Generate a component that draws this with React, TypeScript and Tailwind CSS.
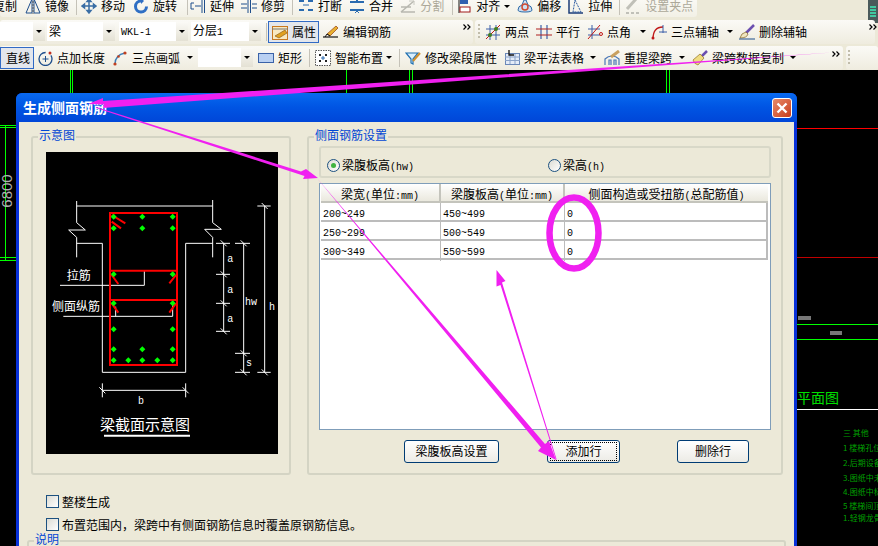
import type { ReactNode } from 'react';

const cjk = 'font-["Noto_Sans_CJK_SC",sans-serif]';

// SimSun style latin: half width characters
function L({ children }: { children: ReactNode }) {
  return <span className='font-["Liberation_Mono",monospace] text-[10px]'>{children}</span>;
}

function Svg({ children }: { children: ReactNode }) {
  return (
    <svg width="16" height="16" viewBox="0 0 16 16" fill="none" className="shrink-0">
      {children}
    </svg>
  );
}

const icons: Record<string, ReactNode> = {
  mirror: <><path d="M7 1 1 15h6zM9 1l6 14H9z" stroke="#1f4e8c" /><path d="M8 0v16" stroke="#555" strokeDasharray="2 1" /></>,
  move: <path d="M8 1v14M1 8h14M8 1 6 3.500h4zM8 15l-2-2.500h4zM1 8l2.500-2v4zM15 8l-2.500-2v4z" stroke="#3a6ea5" strokeWidth="1.500" />,
  rotate: <><circle cx="8" cy="8.500" r="5.500" stroke="#2f6fc4" strokeWidth="3" strokeDasharray="26 8" /><path d="M8 0v6l3-3z" fill="#2f6fc4" /></>,
  extend: <path d="M12 1v14M14.500 1v14M1 5h3M1 11h3M5 8h6M1 5v6" stroke="#1f4e8c" />,
  trim: <path d="M7 1v14M9.500 1v14M0 6h6M0 10h6M11 6h5M11 10h5" stroke="#1f4e8c" />,
  breakLine: <><path d="M1 3h5M10 3h5M1 12h5M10 12h5" stroke="#2a6bb0" strokeWidth="2" /><path d="M5 7h6M3 1v3M13 1v3" stroke="#2a6bb0" /></>,
  merge: <><path d="M1 4h14M1 12h14" stroke="#2a6bb0" strokeWidth="2" /><path d="M6 1l2 2 2-2M6 15l2-2 2 2" stroke="#2a6bb0" /></>,
  split: <><path d="M1 14 14 3M1 14h14M1 9h10" stroke="#b8b8b0" strokeWidth="1.500" /><path d="M9 3h5v4" stroke="#c8c8c0" /></>,
  align: <><path d="M3 1v14" stroke="#111" /><rect x="4" y="2" width="8" height="4" fill="#2f5fb0" /><rect x="4" y="9" width="10" height="5" fill="#fff" stroke="#a01818" /></>,
  offset: <><path d="M1 12q0-4 4-5l2-5h2l2 5q4 1 4 5 0 2-7 2t-7-2z" fill="#cfe0f2" stroke="#2d6aa8" /><circle cx="8" cy="9" r="3" stroke="#d04a30" strokeWidth="1.500" /></>,
  stretch: <><path d="M1 1v14h14" stroke="#1b3d78" strokeWidth="1.500" /><path d="M7 2l6 12H5z" stroke="#2b5aa0" strokeDasharray="2 1" /></>,
  clip: <><path d="M11 1 2 11" stroke="#c0c0b8" strokeWidth="3" /><path d="M1 15h3M6 15h3M11 15h3" stroke="#c0c0b8" strokeWidth="2" /></>,
  props: <><rect x="0.500" y="2.500" width="15" height="13" fill="#f8e8c0" stroke="#c87820" /><path d="M0 5h16" stroke="#777" /><path d="M3 12 13 6l2 3-8 5z" fill="#e0a020" stroke="#805010" strokeWidth=".6" /></>,
  pencil: <><path d="M4 10 13 2l2 2-8 8z" fill="#e8b030" stroke="#a05020" strokeWidth=".8" /><path d="M0 13h15" stroke="#111" strokeWidth="1.200" /><path d="M2 13 4 10l3 2" stroke="#111" /></>,
  twoPoint: <><path d="M5 1v15M11 1v15M1 5h14M1 11h14" stroke="#3b5fa8" /><path d="M1 15 15 1" stroke="#c01818" /><circle cx="11" cy="5" r="2" fill="#3f7f20" /><circle cx="5" cy="11" r="2" fill="#3f7f20" /></>,
  parallel: <><path d="M5 1v14M11 1v14" stroke="#3b5fa8" strokeWidth="1.200" /><path d="M0 5h16M0 11h16" stroke="#b02020" strokeWidth="1.200" /></>,
  angle: <><path d="M5 1v14M1 5h12M1 11h12" stroke="#3b5fa8" /><path d="M1 15 13 1" stroke="#c01818" /><circle cx="14" cy="10" r="1.500" stroke="#c01818" /></>,
  threeAxis: <><path d="M2 15q0-12 10-12" stroke="#c01818" strokeWidth="1.300" /><path d="M8 8h8M12 1v8" stroke="#3b5fa8" /><circle cx="2" cy="14" r="1.500" fill="#c01818" /></>,
  erase: <><path d="M7 9 15 1" stroke="#6b4fb0" strokeWidth="2.500" /><path d="M1 14q1-5 6-6l2 2q-1 4-8 4z" fill="#f0e6c0" stroke="#806020" strokeWidth=".7" /><path d="M0 15h16" stroke="#1f4e8c" /></>,
  pointLen: <><circle cx="8.500" cy="9" r="6.500" stroke="#1f4e8c" strokeWidth="1.300" strokeDasharray="30 6" /><path d="M8.500 6v6M5.500 9h6" stroke="#1f4e8c" /><circle cx="13" cy="3" r="1.500" fill="#c03020" /></>,
  arc: <><path d="M3 14q0-9 10-11" stroke="#3b7fb8" strokeWidth="1.300" /><circle cx="3" cy="14" r="1.600" fill="#c04020" /><circle cx="6.500" cy="6.500" r="1.300" fill="#c04020" /><circle cx="13" cy="3" r="1.600" fill="#c04020" /></>,
  rect: <rect x="0.500" y="3.500" width="15" height="9" fill="#b9d0f2" stroke="#3a62a8" />,
  smart: <><rect x="0.500" y="0.500" width="15" height="15" fill="#fff" stroke="#555" strokeDasharray="1.500 1" /><path d="M4 4h2v2H4zM10 4h2v2h-2zM4 10h2v2H4zM10 10h2v2h-2z" fill="#222" /><path d="M8 6v4M6 8h4" stroke="#2a6bb0" /></>,
  filter: <><path d="M1 3h12L8 9v5l-2-1V9z" fill="#d9eefc" stroke="#1f6fb0" strokeWidth="1.200" /><path d="M8 11 15 3" stroke="#d09030" strokeWidth="2" /></>,
  table: <><rect x="1.500" y="3.500" width="14" height="11" fill="#e4ecf8" stroke="#6b88b8" /><path d="M1 7h15M1 10.500h15M6 4v10M11 4v10" stroke="#8aa2c8" /><path d="M5 0v5h5" stroke="#111" strokeWidth="1.300" /></>,
  reExtract: <><path d="M1 15V9q3-3 7-3t7 3v6M5 15V10h2v5M10 15v-5h2v5" stroke="#4a78b8" strokeWidth="1.200" /><path d="M7 7 15 1" stroke="#c8a060" strokeWidth="3" /></>,
  broom: <><path d="M10 6 15 1" stroke="#6b4fb0" strokeWidth="2.500" /><path d="M1 10 8 4l4 4-6 7q-4-1-5-5z" fill="#f0dc80" stroke="#907020" strokeWidth=".7" /></>,
};

function Tool({ icon, label, className = '', muted = false }: { icon: string; label: string; className?: string; muted?: boolean }) {
  return (
    <div className={`flex shrink-0 items-center gap-1 ${className}`}>
      <Svg>{icons[icon]}</Svg>
      <span className={`whitespace-nowrap ${muted ? 'text-[#aca899]' : 'text-black'}`}>{label}</span>
    </div>
  );
}

function Arrow({ className = '' }: { className?: string }) {
  return <div className={`h-0 w-0 shrink-0 border-x-[3px] border-t-[3px] border-x-transparent border-t-black ${className}`} />;
}

function Sep({ className = '' }: { className?: string }) {
  return <div className={`h-[18px] w-px shrink-0 bg-[#c5c2b8] ${className}`} />;
}

function Chevrons({ className = '' }: { className?: string }) {
  return (
    <svg width="8" height="6" viewBox="0 0 8 6" fill="none" stroke="#000" strokeWidth="1.200" className={`shrink-0 self-start ${className}`}>
      <path d="M0.500 0.500 3 3 0.500 5.500M4.500 0.500 7 3 4.500 5.500" />
    </svg>
  );
}

function Grip({ className = '' }: { className?: string }) {
  return <div className={`h-[16px] w-[2px] shrink-0 bg-[repeating-linear-gradient(to_bottom,#c1bdab_0,#c1bdab_2px,transparent_2px,transparent_4px)] ${className}`} />;
}

function Combo({ text, className = '' }: { text?: ReactNode; className?: string }) {
  return (
    <div className={`flex h-[19px] shrink-0 items-center justify-between bg-white ${className}`}>
      <span className="-mt-[2px] pl-[2px] whitespace-nowrap">{text}</span>
      <div className="flex h-full w-[12px] items-center justify-center bg-gradient-to-b from-[#fbfaf6] to-[#e4e1d4]">
        <Arrow />
      </div>
    </div>
  );
}

function Toolbar({ children, className = '' }: { children: ReactNode; className?: string }) {
  return (
    <div className={`flex items-center rounded-[3px] bg-gradient-to-b from-[#fbfaf6] to-[#efecdf] ${className}`}>
      {children}
    </div>
  );
}

function TopBars() {
  return (
    <div className="h-[70px] bg-[#ece9d8] text-[12px] leading-none">
      <div className="flex h-[19px] items-start">
        <Toolbar className="-mt-[3px] h-[20px] w-[697px] overflow-hidden from-[#ece9d8] to-[#f2f0e6] pb-[2px]">
          <span className="-ml-[7px]">复制</span>
          <Tool icon="mirror" label="镜像" className="ml-[8px]" />
          <Sep className="ml-[7px]" />
          <Tool icon="move" label="移动" className="ml-[4px]" />
          <Tool icon="rotate" label="旋转" className="ml-[8px]" />
          <Sep className="ml-[10px]" />
          <Tool icon="extend" label="延伸" className="ml-[2px]" />
          <Tool icon="trim" label="修剪" className="ml-[7px]" />
          <Sep className="ml-[7px]" />
          <Tool icon="breakLine" label="打断" className="ml-[5px]" />
          <Tool icon="merge" label="合并" className="ml-[7px]" />
          <Tool icon="split" label="分割" className="ml-[7px]" muted />
          <Sep className="ml-[8px]" />
          <Tool icon="align" label="对齐" className="ml-[3px]" />
          <Arrow className="ml-[4px]" />
          <Tool icon="offset" label="偏移" className="ml-[7px]" />
          <Tool icon="stretch" label="拉伸" className="ml-[7px]" />
          <Sep className="ml-[7px]" />
          <Tool icon="clip" label="设置夹点" className="ml-[5px]" muted />
        </Toolbar>
        <div className="ml-auto flex h-[23px] w-[10px] flex-col items-center justify-center gap-px rounded-bl-[3px] bg-[#4a5a5a]">
          <div className="h-[2px] w-[6px] bg-[#40c8a0]" />
          <div className="h-[2px] w-[6px] bg-[#40c8a0]" />
          <div className="h-[2px] w-[6px] bg-[#40c8a0]" />
          <div className="h-[2px] w-[6px] bg-[#40c8a0]" />
        </div>
      </div>
      <div className="flex h-[26px] items-center">
        <Toolbar className="h-[24px] w-[473px] pb-[1px]">
          <Combo className="w-[45px]" />
          <Combo text="梁" className="ml-[2px] w-[68px]" />
          <Combo text={<L>WKL-1</L>} className="ml-[4px] w-[69px]" />
          <Combo text={<>分层<L>1</L></>} className="ml-[3px] w-[70px]" />
          <Sep className="ml-[5px]" />
          <div className="ml-[1px] flex h-[22px] w-[51px] shrink-0 items-center gap-1 border border-[#316ac5] bg-[#e3e6ec] pl-[3px]">
            <Svg>{icons.props}</Svg>
            <span>属性</span>
          </div>
          <Tool icon="pencil" label="编辑钢筋" className="ml-[4px]" />
          <Chevrons className="ml-[72px] mt-[4px]" />
        </Toolbar>
        <Toolbar className="ml-[2px] h-[24px] w-[400px] pb-[1px]">
          <Grip className="ml-[3px]" />
          <Tool icon="twoPoint" label="两点" className="ml-[5px]" />
          <Tool icon="parallel" label="平行" className="ml-[7px]" />
          <Tool icon="angle" label="点角" className="ml-[7px]" />
          <Arrow className="ml-[9px]" />
          <Tool icon="threeAxis" label="三点辅轴" className="ml-[5px]" />
          <Arrow className="ml-[8px]" />
          <Tool icon="erase" label="删除辅轴" className="ml-[6px]" />
          <Chevrons className="ml-[62px] mt-[4px]" />
        </Toolbar>
      </div>
      <div className="flex h-[25px] items-center">
        <Toolbar className="h-[24px] w-[843px]">
          <div className="flex h-[22px] w-[34px] shrink-0 items-center border border-[#316ac5] bg-[#e3e6ec] pl-[5px]">直线</div>
          <Tool icon="pointLen" label="点加长度" className="ml-[3px]" />
          <Tool icon="arc" label="三点画弧" className="ml-[7px]" />
          <Arrow className="ml-[7px]" />
          <Combo className="ml-[5px] w-[55px]" />
          <Tool icon="rect" label="矩形" className="ml-[5px]" />
          <Sep className="ml-[7px]" />
          <Tool icon="smart" label="智能布置" className="ml-[5px]" />
          <Arrow className="ml-[3px]" />
          <Sep className="ml-[7px]" />
          <Tool icon="filter" label="修改梁段属性" className="ml-[5px]" />
          <Tool icon="table" label="梁平法表格" className="ml-[7px]" />
          <Arrow className="ml-[6px]" />
          <Tool icon="reExtract" label="重提梁跨" className="ml-[8px]" />
          <Arrow className="ml-[7px]" />
          <Tool icon="broom" label="梁跨数据复制" className="ml-[7px]" />
          <Arrow className="ml-[6px]" />
          <Chevrons className="ml-[36px] mt-[5px]" />
        </Toolbar>
        <Toolbar className="ml-[3px] h-[24px] flex-1">
          <Grip className="ml-[2px]" />
        </Toolbar>
      </div>
    </div>
  );
}

function SectionDiagram() {
  const dots: [number, number][] = [
    [281, 290], [367, 290], [458, 290], [281, 325], [367, 325], [458, 325],
    [281, 463], [458, 463], [281, 550], [458, 550], [281, 628], [458, 628],
    [281, 688], [367, 688], [458, 688], [281, 721], [325, 721], [367, 721], [412, 721], [458, 721],
  ];
  const ticks: [number, number, number, number][] = [
    [588, 370, 630, 370], [588, 463, 630, 463], [588, 550, 630, 550], [588, 634, 630, 634],
    [645, 370, 690, 370], [645, 700, 690, 700], [645, 757, 690, 757], [712, 258, 752, 258], [712, 757, 752, 757],
    [611, 370, 611, 634], [671, 370, 671, 757], [734, 258, 734, 757],
    [247, 811, 497, 811], [247, 790, 247, 832], [497, 790, 497, 832],
  ];
  const slashes: [number, number][] = [[611, 370], [611, 463], [611, 550], [611, 634], [671, 370], [671, 700], [671, 757], [734, 258], [734, 757], [247, 811], [497, 811]];
  return (
    <svg viewBox="78 96 696 906" className="h-[302px] w-[232px] bg-black" fill="none">
      <g stroke="#fff" strokeWidth="3">
        <path d="M170 258H578" />
        <path d="M170 243V308L196 330H146L170 352V412M578 240V308L604 328H554L578 352V412" />
        <path d="M170 370H247V757H497V370H578" />
        <path d="M120 496H373V452M130 589H458V545M287 589V560" />
        {ticks.map(([a, b, c, d]) => <line key={`${a}-${b}-${c}-${d}`} x1={a} y1={b} x2={c} y2={d} />)}
        {slashes.map(([x, y]) => <line key={`${x}-${y}`} x1={x - 9} y1={y - 9} x2={x + 9} y2={y + 9} />)}
        <path d="M252 947H510" strokeWidth="6" />
      </g>
      <g stroke="#ff0000" strokeWidth="6">
        <rect x="270" y="279" width="201" height="456" />
        <path d="M270 452H471M270 540H471" />
        <path d="M275 285 316 310M275 305 303 325M275 465 295 492M468 465 448 490M275 550 295 578M468 550 448 578" />
      </g>
      {dots.map(([x, y]) => (
        <path key={`${x}-${y}`} d={`M${x} ${y - 9}L${x + 9} ${y}L${x} ${y + 9}L${x - 9} ${y}Z`} fill="#00ff00" />
      ))}
      <g fill="#fff" fontFamily="'Noto Sans CJK SC', sans-serif" fontSize="36">
        <text x="140" y="480">拉筋</text>
        <text x="96" y="574">侧面纵筋</text>
        <text x="240" y="930" fontSize="45">梁截面示意图</text>
      </g>
      <g fill="#fff" fontFamily="'Liberation Mono', monospace" fontSize="30">
        <text x="622" y="426">a</text>
        <text x="622" y="519">a</text>
        <text x="622" y="606">a</text>
        <text x="675" y="554">hw</text>
        <text x="678" y="739">s</text>
        <text x="747" y="570">h</text>
        <text x="354" y="851">b</text>
      </g>
    </svg>
  );
}

function Group({ title, className = '', children }: { title: string; className?: string; children?: ReactNode }) {
  return (
    <div className={`relative rounded-[3px] border-2 border-[#d4d4c4] ${className}`}>
      <span className="absolute -top-[10px] left-[5px] bg-[#ece9d8] px-px leading-[14px] text-[#0046d5]">{title}</span>
      {children}
    </div>
  );
}

function Radio({ checked, children, className = '' }: { checked?: boolean; children: ReactNode; className?: string }) {
  return (
    <div className={`flex items-center gap-[2px] ${className}`}>
      <div className="flex h-[13px] w-[13px] items-center justify-center rounded-full border border-[#1c5180] bg-gradient-to-br from-[#dcdcd4] to-white">
        {checked && <div className="h-[5px] w-[5px] rounded-full bg-[#3fb33f]" />}
      </div>
      <span className="whitespace-nowrap">{children}</span>
    </div>
  );
}

function XpButton({ children, className = '', focused = false }: { children: ReactNode; className?: string; focused?: boolean }) {
  return (
    <div className={`flex h-[23px] items-center justify-center rounded-[3px] border border-[#003c74] bg-gradient-to-b from-white to-[#ecebe5] ${className}`}>
      <div className={`flex h-[19px] w-[calc(100%-4px)] items-center justify-center ${focused ? 'border border-dotted border-black' : ''}`}>
        {children}
      </div>
    </div>
  );
}

function Check({ children }: { children: ReactNode }) {
  return (
    <div className="flex h-[13px] items-center gap-[3px]">
      <div className="h-[13px] w-[13px] shrink-0 border border-[#1c5180] bg-gradient-to-br from-[#dcdcd4] to-white" />
      <span className="whitespace-nowrap">{children}</span>
    </div>
  );
}

const rows = [
  ['200~249', '450~499', '0'],
  ['250~299', '500~549', '0'],
  ['300~349', '550~599', '0'],
];

function Dialog() {
  return (
    <div className={`absolute left-[16px] top-[93px] flex h-[470px] w-[781px] flex-col rounded-t-[6px] bg-[#0831d9] text-[12px] text-black ${cjk}`}>
      <div className="flex h-[29px] shrink-0 items-center justify-between rounded-t-[6px] bg-gradient-to-b from-[#0a6af0] via-[#0054e3] to-[#0046d8] pl-[7px] pr-[5px]">
        <span className="text-[14px] font-bold text-white">生成侧面钢筋</span>
        <div className="flex h-[20px] w-[20px] items-center justify-center rounded-[3px] border border-white bg-gradient-to-br from-[#e88a68] to-[#c63a18]">
          <svg width="12" height="12" viewBox="0 0 12 12"><path d="M1.500 1.500 10.500 10.500M10.500 1.500 1.500 10.500" stroke="#fff" strokeWidth="2.400" /></svg>
        </div>
      </div>
      <div className="mx-[3px] flex-1 bg-[#ece9d8] pl-[12px] pr-[11px] pt-[14px]">
        <div className="flex gap-[16px]">
          <Group title="示意图" className="h-[339px] w-[260px] shrink-0 pl-[13px] pt-[14px]">
            <SectionDiagram />
          </Group>
          <Group title="侧面钢筋设置" className="h-[339px] w-[476px] shrink-0 px-[10px] pt-[8px]">
            <div className="flex h-[32px] items-center rounded-[3px] border-2 border-[#d8d8c8] pl-[6px] pt-[6px]">
              <Radio checked>梁腹板高<L>(hw)</L></Radio>
              <Radio className="ml-[134px]">梁高<L>(h)</L></Radio>
            </div>
            <div className="mt-[5px] h-[247px] border border-[#7f9db9] bg-white pl-px">
              <div className="grid w-[447px] grid-cols-[120px_124px_203px] bg-gradient-to-b from-white to-[#e8e6da] leading-[19px]">
                <div className="h-[19px] border-r-2 border-b-2 border-[#c4c4bc] text-center">梁宽<L>(</L>单位<L>:mm)</L></div>
                <div className="h-[19px] border-r-2 border-b-2 border-[#c4c4bc] text-center">梁腹板高<L>(</L>单位<L>:mm)</L></div>
                <div className="h-[19px] border-b-2 border-[#c4c4bc] text-center">侧面构造或受扭筋<L>(</L>总配筋值<L>)</L></div>
              </div>
              {rows.map((row) => (
                <div key={row[0]} className="grid h-[19px] w-[447px] grid-cols-[120px_124px_203px] border-b-2 border-r-2 border-[#bcbcbc] bg-white leading-[17px]">
                  {row.map((cell, i) => (
                    <div key={i} className={`pl-[2px] ${i < 2 ? 'border-r border-[#bcbcbc]' : ''}`}>
                      <L>{cell}</L>
                    </div>
                  ))}
                </div>
              ))}
            </div>
            <div className="mt-[10px] flex pl-[85px]">
              <XpButton className="w-[95px]"><span className="-mt-[2px]">梁腹板高设置</span></XpButton>
              <XpButton className="ml-[48px] w-[73px]" focused><span className="-mt-[2px]">添加行</span></XpButton>
              <XpButton className="ml-[57px] w-[72px]"><span className="-mt-[2px]">删除行</span></XpButton>
            </div>
          </Group>
        </div>
        <div className="mt-[20px] flex flex-col gap-[10px] pl-[15px]">
          <Check>整楼生成</Check>
          <Check>布置范围内，梁跨中有侧面钢筋信息时覆盖原钢筋信息。</Check>
        </div>
        <Group title="说明" className="mt-[9px] -ml-[4px] h-[30px] w-[759px]" />
      </div>
    </div>
  );
}

// CAD drawing behind the dialog
function CadCanvas() {
  const notes = [
    { top: 'top-[428px]', text: '三 其他' },
    { top: 'top-[443px]', text: '1 楼梯孔位' },
    { top: 'top-[458px]', text: '2.后期设备' },
    { top: 'top-[473px]', text: '3.图纸中未' },
    { top: 'top-[487px]', text: '4.图纸中标' },
    { top: 'top-[501px]', text: '5 楼梯间顶' },
    { top: 'top-[513px]', text: '1.轻钢龙骨' },
  ];
  return (
    <>
      <div className="absolute left-[70px] top-[70px] h-[23px] w-[3px] border-x border-[#00ff00]" />
      <div className="absolute left-[346px] top-[70px] h-[23px] w-px bg-[#00ff00]" />
      <div className="absolute left-[409px] top-[70px] h-[23px] w-[4px] border-x border-[#00ff00]" />
      <div className="absolute left-[666px] top-[70px] h-[23px] w-[4px] border-x border-[#00ff00]" />
      <div className="absolute left-0 top-[125px] h-[3px] w-[16px] border-y border-[#00ff00]" />
      <div className="absolute left-0 top-[257px] h-[4px] w-[16px] border-y border-[#00ff00]" />
      <div className="absolute left-[5px] top-[126px] h-[134px] w-px bg-[#00ff00]" />
      <span className='absolute left-[-10px] top-[184px] -rotate-90 font-["Liberation_Sans",sans-serif] text-[15px] leading-[14px] text-[#b0b0b0]'>6800</span>
      <div className="absolute left-[797px] top-[128px] h-px w-[81px] bg-[#ff0000]" />
      <div className="absolute left-[797px] top-[257px] h-px w-[81px] bg-[#c00000]" />
      <div className="absolute left-[797px] top-[324px] h-px w-[81px] bg-[#00ff00]" />
      <div className="absolute left-[797px] top-[339px] h-px w-[81px] bg-[#00ff00]" />
      <div className="absolute left-[798px] top-[316px] h-[4px] w-[13px] bg-[#777]" />
      <div className="absolute left-[830px] top-[331px] h-[4px] w-[12px] bg-[#777]" />
      <span className={`absolute left-[797px] top-[387px] text-[14px] leading-[20px] text-[#00e000] ${cjk}`}>平面图</span>
      <div className="absolute left-[797px] top-[409px] h-px w-[81px] bg-white" />
      {notes.map((n) => (
        <span key={n.text} className={`absolute left-[843px] ${n.top} whitespace-nowrap text-[8px] leading-[10px] text-[#00a000] ${cjk}`}>
          {n.text}
        </span>
      ))}
    </>
  );
}

// hand drawn magenta marks over the screenshot
function Annotations() {
  return (
    <svg className="pointer-events-none absolute left-0 top-0" width="878" height="546" fill="#f020f0">
      <path d="M832 52.500 103 108l1-3.500-16-.5 15-6 0 3z" />
      <path d="M96 107 301 171.500l5-2.500 12 9-15 1 1.500-3L96 108z" />
      <path d="M316 177 L545 444 l4-3 7 19-18-9 3-3.500z" />
      <path d="M556 460 500.500 285l-4 1.500 0-16.500 9 11-3.500 1.500L556.500 459z" />
      <ellipse cx="574" cy="233" rx="24.500" ry="35.500" fill="none" stroke="#f020f0" strokeWidth="6.500" />
    </svg>
  );
}

export default function App() {
  return (
    <div className={`relative h-[546px] w-[878px] overflow-hidden bg-black ${cjk}`}>
      <TopBars />
      <CadCanvas />
      <Dialog />
      <Annotations />
    </div>
  );
}
